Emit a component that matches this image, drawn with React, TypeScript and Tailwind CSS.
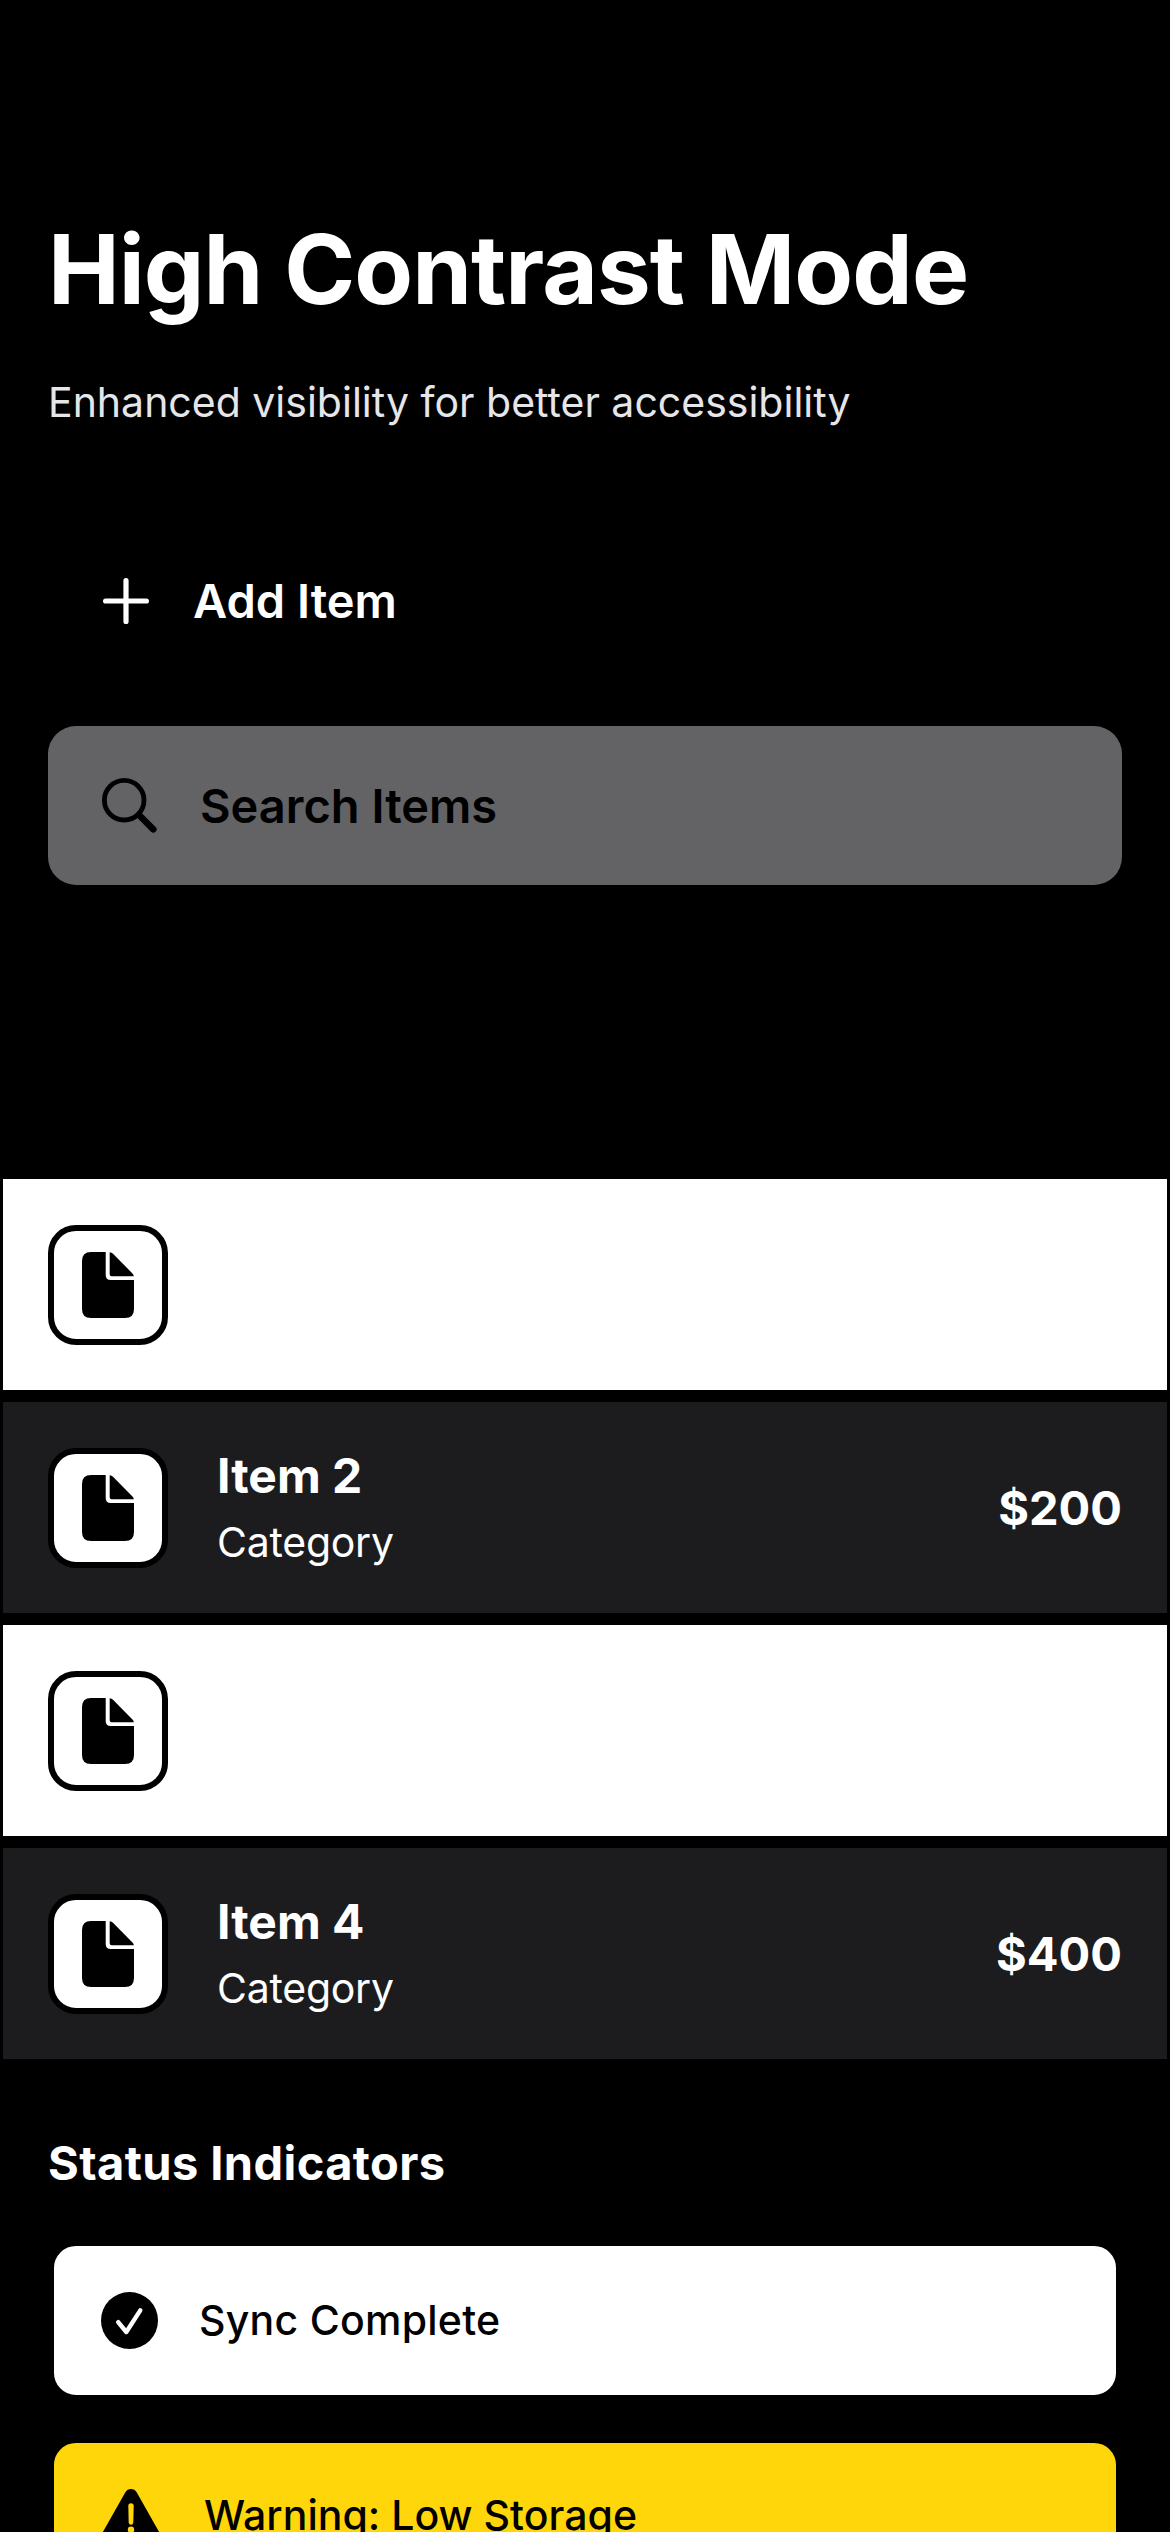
type Item = { id: number; name?: string; category?: string; price?: string };

const items: Item[] = [
  { id: 1 },
  { id: 2, name: "Item 2", category: "Category", price: "$200" },
  { id: 3 },
  { id: 4, name: "Item 4", category: "Category", price: "$400" },
];

function PlusIcon() {
  return (
    <svg className="h-[46px] w-[46px] shrink-0" viewBox="0 0 46 46" fill="none" stroke="currentColor" strokeWidth="5.2" strokeLinecap="round">
      <path d="M23 2.6V43.4M2.6 23H43.4" />
    </svg>
  );
}

function SearchIcon() {
  return (
    <svg className="h-[55px] w-[55px] shrink-0" viewBox="0 0 55 55" fill="none" stroke="currentColor" strokeLinecap="round">
      <circle cx="22.2" cy="22.2" r="19.8" strokeWidth="4.8" />
      <path d="M37.5 37.5L51.3 51.3" strokeWidth="6.6" />
    </svg>
  );
}

function DocumentIcon() {
  return (
    <svg className="h-[66px] w-[52px]" viewBox="0 0 52 66" fill="currentColor">
      <path d="M9 0H23.7V23Q23.7 28 28.7 28H52V57Q52 66 43 66H9Q0 66 0 57V9Q0 0 9 0Z" />
      <path d="M27.7 0.3Q29.4 0.2 31 1.8L50.2 21.2Q51.7 22.8 51.9 24.3H29.7Q27.7 24.3 27.7 22.3Z" />
    </svg>
  );
}

function CheckCircleIcon() {
  return (
    <svg className="h-[57px] w-[57px] shrink-0" viewBox="0 0 57 57" fill="none">
      <circle cx="28.5" cy="28.5" r="28.5" fill="black" />
      <path d="M17.2 30.2L25.3 40L39.3 18.4" stroke="white" strokeWidth="4.4" strokeLinecap="round" strokeLinejoin="round" />
    </svg>
  );
}

function WarningIcon() {
  return (
    <svg className="h-[56px] w-[62px] shrink-0" viewBox="0 0 62 56" fill="none">
      <path
        d="M25.2 3.4Q27.3 0 31 0Q34.7 0 36.8 3.4L60.6 45.6Q62 48 62 50Q62 56 55.6 56H6.4Q0 56 0 50Q0 48 1.4 45.6Z"
        fill="black"
      />
      <path d="M28.3 16.8Q28.3 14.3 31 14.3Q33.7 14.3 33.7 16.8L33.3 33.6Q33.2 35.8 31 35.8Q28.8 35.8 28.7 33.6Z" fill="#ffd60a" />
      <circle cx="31" cy="40.8" r="3.2" fill="#ffd60a" />
    </svg>
  );
}

function ItemRow({ item }: { item: Item }) {
  return (
    <li
      className={`flex h-[223px] items-center gap-12 border-x-3 border-y-6 border-black px-[45px] ${
        item.name ? "bg-[#1c1c1e]" : "bg-white"
      }`}
    >
      <div className="mt-px flex size-[120px] shrink-0 items-center justify-center rounded-[28px] border-6 border-black bg-white text-black">
        <DocumentIcon />
      </div>
      {item.name && (
        <>
          <div className="flex grow flex-col gap-2 pt-px pl-px">
            <span className="text-[48px] leading-[60px] font-bold">{item.name}</span>
            <span className="text-[41px] leading-[56px] tracking-[-0.25px]">{item.category}</span>
          </div>
          <span className="text-[47px] leading-[60px] font-bold">{item.price}</span>
        </>
      )}
    </li>
  );
}

export default function App() {
  return (
    <main className="flex h-[2532px] w-[1170px] flex-col overflow-hidden bg-black pt-[209px] font-['Inter',sans-serif] text-white">
      <header className="flex flex-col gap-[46px] px-12">
        <h1 className="text-[96px] leading-[120px] font-bold tracking-[-0.93px]">High Contrast Mode</h1>
        <p className="text-[41px] leading-[54px] text-[#e5e5ea]">Enhanced visibility for better accessibility</p>
      </header>

      <div className="mt-[92px] flex flex-col gap-[46px] px-12">
        <button className="flex h-[159px] items-center gap-11 rounded-[28px] pt-px pl-[55px]">
          <PlusIcon />
          <span className="text-[47px] leading-[60px] font-semibold">Add Item</span>
        </button>
        <button className="flex h-[159px] items-center gap-[43px] rounded-[28px] bg-[#636366] pl-[54px] text-black">
          <SearchIcon />
          <span className="text-[47px] leading-[60px] font-semibold">Search Items</span>
        </button>
      </div>

      <ul className="mt-[288px] flex flex-col">
        {items.map((item) => (
          <ItemRow key={item.id} item={item} />
        ))}
      </ul>

      <section className="mt-[68px] flex flex-col px-12">
        <h2 className="text-[47px] leading-[60px] font-bold tracking-[0.4px]">Status Indicators</h2>
        <div className="mt-[47px] flex flex-col gap-9 text-black">
          <div className="flex h-[161px] shrink-0 items-center gap-[41px] rounded-[28px] border-6 border-black bg-white pl-[47px]">
            <CheckCircleIcon />
            <span className="-mt-0.5 text-[41px] leading-[54px] font-medium tracking-[0.26px]">Sync Complete</span>
          </div>
          <div className="flex h-[159px] shrink-0 items-center gap-[42px] rounded-[28px] border-6 border-black bg-[#ffd60a] pl-[46px]">
            <WarningIcon />
            <span className="-mt-1 text-[41px] leading-[54px] font-medium tracking-[0.03px]">Warning: Low Storage</span>
          </div>
        </div>
      </section>
    </main>
  );
}
